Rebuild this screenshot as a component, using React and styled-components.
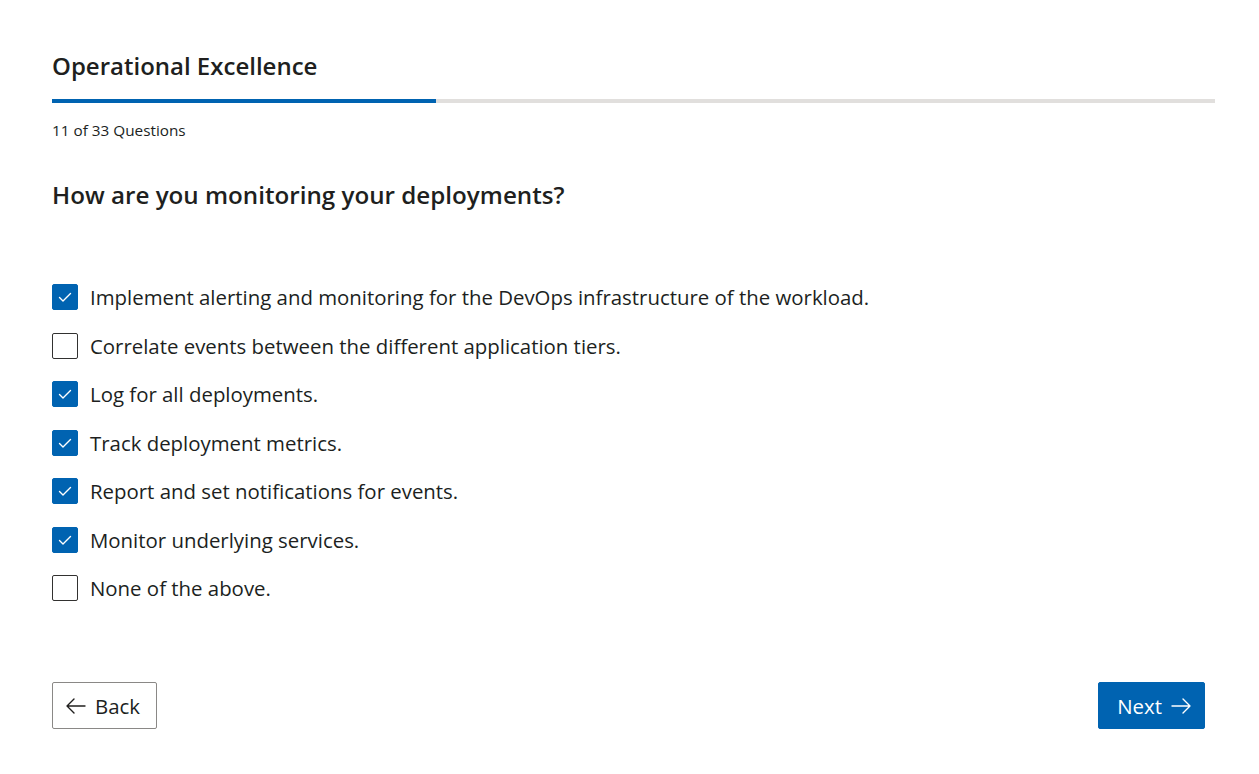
import React, { useState } from "react";
import styled, { createGlobalStyle } from "styled-components";

const GlobalStyle = createGlobalStyle`
  html, body {
    margin: 0;
    padding: 0;
    background: #ffffff;
  }
  body {
    font-family: "Open Sans", "Noto Sans", sans-serif;
    color: #201f1e;
  }
  * {
    box-sizing: border-box;
  }
`;

const options = [
  { id: 1, text: "Implement alerting and monitoring for the DevOps infrastructure of the workload.", checked: true },
  { id: 2, text: "Correlate events between the different application tiers.", checked: false },
  { id: 3, text: "Log for all deployments.", checked: true },
  { id: 4, text: "Track deployment metrics.", checked: true },
  { id: 5, text: "Report and set notifications for events.", checked: true },
  { id: 6, text: "Monitor underlying services.", checked: true },
  { id: 7, text: "None of the above.", checked: false },
];

function CheckIcon() {
  return (
    <svg width="18" height="18" viewBox="0 0 18 18" fill="none">
      <path d="M3.5 9.5 L7 13 L14.5 5.5" stroke="#fff" strokeWidth="1.4" strokeLinecap="round" strokeLinejoin="round" />
    </svg>
  );
}

function ArrowIcon({ dir }) {
  const d = dir === "left" ? "M20 10 H2 M9 3 L2 10 L9 17" : "M1 10 H19 M12 3 L19 10 L12 17";
  return (
    <svg width="21" height="20" viewBox="0 0 21 20" fill="none">
      <path d={d} stroke="currentColor" strokeWidth="1.4" strokeLinecap="round" strokeLinejoin="round" />
    </svg>
  );
}

export default function App() {
  const [items, setItems] = useState(options);
  const current = 11;
  const total = 33;
  const percent = Math.round((current / total) * 100);

  const toggle = (id) => {
    setItems(items.map((item) => (item.id === id ? { ...item, checked: !item.checked } : item)));
  };

  return (
    <>
      <GlobalStyle />
      <Page>
        <Title>Operational Excellence</Title>
        <Track>
          <Fill style={{ width: `${percent}%` }} />
        </Track>
        <Counter>
          {current} of {total} Questions
        </Counter>
        <Question>How are you monitoring your deployments?</Question>
        <OptionList>
          {items.map((item) => (
            <Option key={item.id} onClick={() => toggle(item.id)}>
              <Box $checked={item.checked}>{item.checked && <CheckIcon />}</Box>
              <OptionText>{item.text}</OptionText>
            </Option>
          ))}
        </OptionList>
        <Footer>
          <Button>
            <ArrowIcon dir="left" />
            Back
          </Button>
          <Button $primary>
            Next
            <ArrowIcon dir="right" />
          </Button>
        </Footer>
      </Page>
    </>
  );
}

const Page = styled.div`
  padding: 49px 44px 0 52px;
`;

const Title = styled.h1`
  margin: 0;
  font-size: 24px;
  font-weight: 600;
  line-height: 34px;
`;

const Track = styled.div`
  height: 4px;
  margin-top: 16px;
  background: #e1dfdd;
`;

const Fill = styled.div`
  height: 100%;
  background: #0063b1;
`;

const Counter = styled.div`
  margin-top: 17px;
  font-size: 15.3px;
  line-height: 20px;
`;

const Question = styled.h2`
  margin: 39px 0 0;
  font-size: 24.2px;
  font-weight: 600;
  line-height: 32px;
`;

const OptionList = styled.div`
  display: flex;
  flex-direction: column;
  gap: 22.5px;
  margin-top: 73px;
`;

const Option = styled.label`
  display: flex;
  align-items: center;
  gap: 12px;
  cursor: pointer;
`;

const Box = styled.span`
  display: flex;
  align-items: center;
  justify-content: center;
  width: 26px;
  height: 26px;
  flex: none;
  border-radius: 2px;
  border: 1px solid ${(p) => (p.$checked ? "#0063b1" : "#323130")};
  background: ${(p) => (p.$checked ? "#0063b1" : "#fff")};
`;

const OptionText = styled.span`
  font-size: 20.4px;
  line-height: 26px;
`;

const Footer = styled.div`
  display: flex;
  justify-content: space-between;
  margin-top: 81px;
  padding-right: 10px;
`;

const Button = styled.button`
  display: flex;
  align-items: center;
  gap: 9px;
  height: 47px;
  padding: ${(p) => (p.$primary ? "0 12px 0 18px" : "0 16px 0 12px")};
  border-radius: 2px;
  border: 1px solid ${(p) => (p.$primary ? "#0063b1" : "#8a8886")};
  background: ${(p) => (p.$primary ? "#0063b1" : "#fff")};
  color: ${(p) => (p.$primary ? "#fff" : "#201f1e")};
  font-family: inherit;
  font-size: 20.4px;
  cursor: pointer;
`;
